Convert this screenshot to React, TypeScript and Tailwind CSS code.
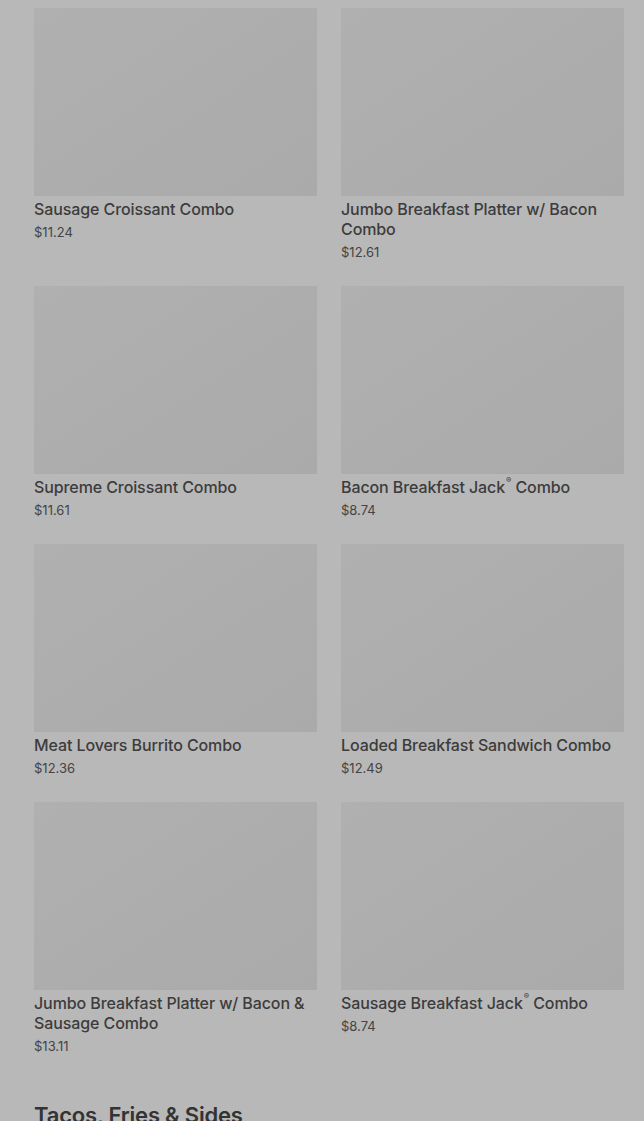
const items = [
  { name: "Sausage Croissant Combo", price: "$11.24" },
  { name: "Jumbo Breakfast Platter w/ Bacon Combo", price: "$12.61" },
  { name: "Supreme Croissant Combo", price: "$11.61" },
  { name: "Bacon Breakfast Jack® Combo", price: "$8.74" },
  { name: "Meat Lovers Burrito Combo", price: "$12.36" },
  { name: "Loaded Breakfast Sandwich Combo", price: "$12.49" },
  { name: "Jumbo Breakfast Platter w/ Bacon & Sausage Combo", price: "$13.11" },
  { name: "Sausage Breakfast Jack® Combo", price: "$8.74" },
];

const ItemCard = ({ name, price }: { name: string; price: string }) => (
  <div className="flex flex-col">
    {/* Image placeholder */}
    <div className="h-[188px] w-full bg-gradient-to-br from-[#b0b0b0] to-[#aaaaaa]" />
    <h3 className="mt-[3px] text-[16px] leading-[20px] font-medium tracking-[-0.1px] text-[#3c3c3c]">
      {name.split("®").map((part, i, arr) => (
        <span key={i}>
          {part}
          {i < arr.length - 1 && <sup className="text-[8px] align-super ml-px">®</sup>}
        </span>
      ))}
    </h3>
    <span className="mt-1 text-[13px] leading-[18px] text-[#444]">{price}</span>
  </div>
);

export default function App() {
  return (
    <div
      className="h-[1121px] overflow-hidden bg-[#b8b8b8] pl-[34px] pr-[20px] pt-2"
      style={{ fontFamily: "Inter, 'Liberation Sans', sans-serif" }}
    >
      <div className="grid grid-cols-2 gap-x-6 gap-y-[25px]">
        {items.map((item) => (
          <ItemCard key={item.name} {...item} />
        ))}
      </div>
      <h2 className="mt-[44px] text-[22px] leading-[32px] font-semibold tracking-[-0.2px] text-[#333]">
        Tacos, Fries &amp; Sides
      </h2>
    </div>
  );
}
